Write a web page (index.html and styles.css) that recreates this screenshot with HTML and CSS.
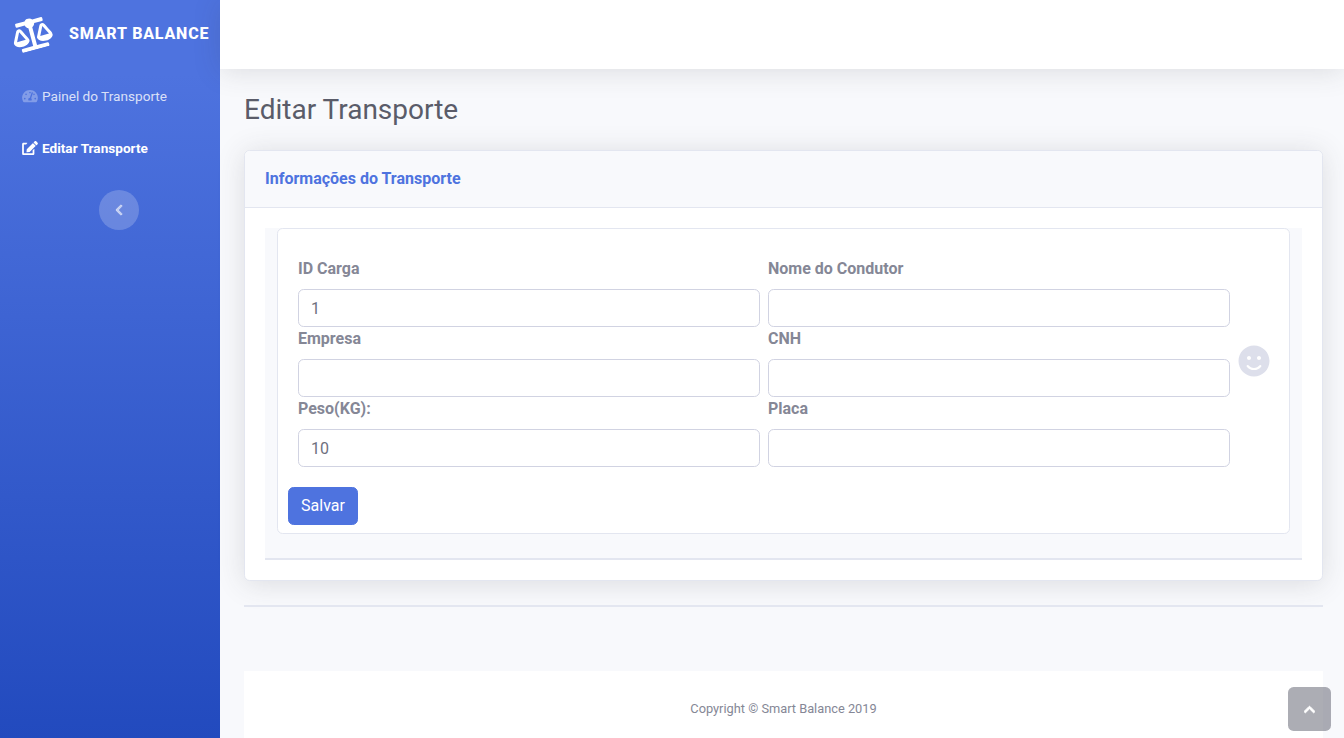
FILE: index.html
```html
<!DOCTYPE html>
<html lang="pt-BR">
<head>
    <meta charset="UTF-8">
    <meta name="viewport" content="width=device-width, initial-scale=1.0">
    <title>Editar Transporte</title>
    <link rel="stylesheet" href="styles.css">
</head>
<body>
    <div class="wrapper">
        <aside class="sidebar">
            <a class="brand" href="#">
                <svg class="brand-icon" viewBox="0 0 640 512"><path fill="currentColor" d="M256 336h-.02c0-16.18 1.34-8.73-85.05-181.51-17.65-35.29-68.19-35.36-85.87 0C-2.06 328.75.02 320.33.02 336H0c0 44.18 57.31 80 128 80s128-35.82 128-80zM128 176l72 144H56l72-144zm511.98 160c0-16.18 1.34-8.73-85.05-181.51-17.65-35.29-68.19-35.36-85.87 0-87.12 174.26-85.04 165.84-85.04 181.51H384c0 44.18 57.31 80 128 80s128-35.82 128-80h-.02zM440 320l72-144 72 144H440zm88 128H352V153.25c23.51-10.29 41.16-31.48 46.39-57.25H528c8.84 0 16-7.16 16-16V48c0-8.84-7.16-16-16-16H383.64C369.04 12.68 346.09 0 320 0s-49.04 12.68-63.64 32H112c-8.84 0-16 7.16-16 16v32c0 8.84 7.16 16 16 16h129.61c5.23 25.76 22.87 46.96 46.39 57.25V448H112c-8.84 0-16 7.16-16 16v32c0 8.84 7.16 16 16 16h416c8.84 0 16-7.16 16-16v-32c0-8.84-7.16-16-16-16z"/></svg>
                <span class="brand-text">SMART BALANCE</span>
            </a>
            <nav class="nav">
                <a class="nav-link" href="#">
                    <svg class="nav-icon" viewBox="0 0 576 512"><path fill="currentColor" d="M288 32C128.94 32 0 160.94 0 320c0 52.8 14.25 102.26 39.06 144.8 5.61 9.62 16.3 15.2 27.44 15.2h443c11.14 0 21.83-5.58 27.44-15.2C561.75 422.26 576 372.8 576 320c0-159.06-128.94-288-288-288zm0 64c14.71 0 26.58 10.13 30.32 23.65-1.11 2.26-2.64 4.23-3.45 6.67l-9.22 27.67c-5.13 3.49-10.97 6.01-17.64 6.01-17.67 0-32-14.33-32-32S270.33 96 288 96zM96 384c-17.67 0-32-14.33-32-32s14.33-32 32-32 32 14.33 32 32-14.33 32-32 32zm48-160c-17.67 0-32-14.33-32-32s14.33-32 32-32 32 14.33 32 32-14.33 32-32 32zm246.77-72.41l-61.33 184C343.13 347.33 352 364.54 352 384c0 11.72-3.38 22.55-8.88 32H232.88c-5.5-9.45-8.88-20.28-8.88-32 0-33.94 26.5-61.43 59.9-63.59l61.34-184.01c4.17-12.56 17.73-19.45 30.36-15.17 12.57 4.19 19.35 17.79 15.17 30.36zm14.66 57.2l15.52-46.55c3.47-1.29 7.13-2.23 11.05-2.23 17.67 0 32 14.33 32 32s-14.33 32-32 32c-11.38-.01-20.89-6.28-26.57-15.22zM480 384c-17.67 0-32-14.33-32-32s14.33-32 32-32 32 14.33 32 32-14.33 32-32 32z"/></svg>
                    <span>Painel do Transporte</span>
                </a>
                <a class="nav-link active" href="#">
                    <svg class="nav-icon" viewBox="0 0 576 512"><path fill="currentColor" d="M402.6 83.2l90.2 90.2c3.8 3.8 3.8 10 0 13.8L274.4 405.6l-92.8 10.3c-12.4 1.4-22.9-9.1-21.5-21.5l10.3-92.8L388.8 83.2c3.8-3.8 10-3.8 13.8 0zm162-22.9l-48.8-48.8c-15.2-15.2-39.9-15.2-55.2 0l-35.4 35.4c-3.8 3.8-3.8 10 0 13.8l90.2 90.2c3.8 3.8 10 3.8 13.8 0l35.4-35.4c15.2-15.3 15.2-40 0-55.2zM384 346.2V448H64V128h73.1c3.2 0 6.2-1.3 8.5-3.5l40-40c7.6-7.6 2.2-20.5-8.5-20.5H48C21.5 64 0 85.5 0 112v352c0 26.5 21.5 48 48 48h352c26.5 0 48-21.5 48-48V306.2c0-10.7-12.9-16-20.5-8.5l-40 40c-2.2 2.3-3.5 5.3-3.5 8.5z"/></svg>
                    <span>Editar Transporte</span>
                </a>
            </nav>
            <button class="sidebar-toggle" type="button" aria-label="Recolher menu">
                <svg viewBox="0 0 320 512"><path fill="currentColor" d="M34.52 239.03L228.87 44.69c9.37-9.37 24.57-9.37 33.94 0l22.67 22.67c9.36 9.36 9.37 24.52.04 33.9L131.49 256l154.02 154.75c9.34 9.38 9.32 24.54-.04 33.9l-22.67 22.67c-9.37 9.37-24.57 9.37-33.94 0L34.52 272.97c-9.37-9.37-9.37-24.57 0-33.94z"/></svg>
            </button>
        </aside>

        <div class="main">
            <header class="topbar"></header>

            <div class="content">
                <h1 class="page-title">Editar Transporte</h1>

                <section class="card">
                    <div class="card-header">
                        <h2>Informações do Transporte</h2>
                    </div>
                    <div class="card-body">
                        <div class="form-strip">
                            <form class="form-card">
                                <div class="form-row">
                                    <div class="fields">
                                        <div class="field">
                                            <label for="idCarga">ID Carga</label>
                                            <input type="text" id="idCarga" value="1">
                                        </div>
                                        <div class="field">
                                            <label for="condutor">Nome do Condutor</label>
                                            <input type="text" id="condutor">
                                        </div>
                                        <div class="field">
                                            <label for="empresa">Empresa</label>
                                            <input type="text" id="empresa">
                                        </div>
                                        <div class="field">
                                            <label for="cnh">CNH</label>
                                            <input type="text" id="cnh">
                                        </div>
                                        <div class="field">
                                            <label for="peso">Peso(KG):</label>
                                            <input type="text" id="peso" value="10">
                                        </div>
                                        <div class="field">
                                            <label for="placa">Placa</label>
                                            <input type="text" id="placa">
                                        </div>
                                    </div>
                                    <svg class="smile" viewBox="0 0 496 512"><path fill="currentColor" d="M248 8C111 8 0 119 0 256s111 248 248 248 248-111 248-248S385 8 248 8zm80 168c17.7 0 32 14.3 32 32s-14.3 32-32 32-32-14.3-32-32 14.3-32 32-32zm-160 0c17.7 0 32 14.3 32 32s-14.3 32-32 32-32-14.3-32-32 14.3-32 32-32zm194.8 170.2C334.3 380.4 292.5 400 248 400s-86.3-19.6-114.8-53.8c-13.6-16.3 11-36.7 24.6-20.5 22.4 26.9 55.2 42.2 90.2 42.2s67.8-15.4 90.2-42.2c13.4-16.2 38.1 4.2 24.6 20.5z"/></svg>
                                </div>
                                <button class="btn-save" type="button">Salvar</button>
                            </form>
                        </div>
                    </div>
                </section>

                <hr class="divider">
            </div>

            <footer class="footer">Copyright © Smart Balance 2019</footer>
        </div>
    </div>

    <a class="scroll-top" href="#" aria-label="Voltar ao topo">
        <svg viewBox="0 0 448 512"><path fill="currentColor" d="M240.971 130.524l194.343 194.343c9.373 9.373 9.373 24.569 0 33.941l-22.667 22.667c-9.357 9.357-24.522 9.375-33.901.04L224 227.495 69.255 381.516c-9.379 9.335-24.544 9.317-33.901-.04l-22.667-22.667c-9.373-9.373-9.373-24.569 0-33.941L207.03 130.525c9.372-9.373 24.568-9.373 33.941-.001z"/></svg>
    </a>
</body>
</html>
```

FILE: styles.css
```css
* {
    box-sizing: border-box;
}

html,
body {
    height: 100%;
    margin: 0;
    overflow: hidden;
}

body {
    font-family: Roboto, "Liberation Sans", sans-serif;
    font-size: 16px;
    line-height: 1.5;
    color: #858796;
    background-color: #f8f9fc;
}

a {
    text-decoration: none;
}

.wrapper {
    display: flex;
    height: 738px;
}

/* sidebar */
.sidebar {
    width: 220px;
    flex-shrink: 0;
    display: flex;
    flex-direction: column;
    background-color: #4e73df;
    background-image: linear-gradient(180deg, #4e73df 10%, #224abe 100%);
}

.brand {
    height: 70px;
    padding: 0 0 3px 12px;
    display: flex;
    align-items: center;
    color: #fff;
}

.brand-icon {
    width: 40px;
    height: 32px;
    transform: rotate(-15deg);
}

.brand-text {
    margin-left: 17px;
    font-size: 16px;
    font-weight: 800;
    letter-spacing: 0.8px;
    white-space: nowrap;
}

.nav-link {
    height: 52px;
    padding-left: 22px;
    display: flex;
    align-items: center;
    font-size: 13.6px;
    color: rgba(255, 255, 255, 0.8);
}

.nav-link.active {
    color: #fff;
    font-weight: 700;
}

.nav-icon {
    width: 16px;
    height: 14px;
    margin-right: 4px;
    color: rgba(255, 255, 255, 0.3);
}

.nav-link.active .nav-icon {
    color: #fff;
}

.sidebar-toggle {
    width: 40px;
    height: 40px;
    margin: 16px 0 0 99px;
    padding: 0;
    border: 0;
    border-radius: 50%;
    display: flex;
    align-items: center;
    justify-content: center;
    background-color: rgba(255, 255, 255, 0.2);
}

.sidebar-toggle svg {
    width: 8px;
    height: 12px;
    color: rgba(255, 255, 255, 0.6);
    stroke: currentColor;
    stroke-width: 30;
}

/* main column */
.main {
    flex: 1;
    min-width: 0;
    display: flex;
    flex-direction: column;
}

.topbar {
    height: 69px;
    flex-shrink: 0;
    background-color: #fff;
    box-shadow: 0 2.4px 28px 0 rgba(58, 59, 69, 0.15);
}

.content {
    flex: 1;
    padding: 0 21px 0 24px;
}

.page-title {
    margin: 24px 0 18px;
    font-size: 28px;
    font-weight: 400;
    line-height: 1.2;
    height: 39px;
    color: #5a5c69;
}

.card {
    height: 431px;
    background-color: #fff;
    border: 1px solid #e3e6f0;
    border-radius: 5.6px;
    box-shadow: 0 2.4px 28px 0 rgba(58, 59, 69, 0.15);
}

.card-header {
    height: 57px;
    padding: 0 20px;
    display: flex;
    align-items: center;
    background-color: #f8f9fc;
    border-bottom: 1px solid #e3e6f0;
    border-radius: 5px 5px 0 0;
}

.card-header h2 {
    margin: 0;
    font-size: 16px;
    font-weight: 700;
    color: #4e73df;
}

.card-body {
    padding: 20px;
}

.form-strip {
    padding: 0 12px 24px;
    background-color: #f8f9fc;
    border-bottom: 2px solid #e3e6f0;
}

.form-card {
    height: 306px;
    padding: 28px 10px 0;
    background-color: #fff;
    border: 1px solid #e3e6f0;
    border-radius: 5.6px;
}

.form-row {
    display: flex;
    align-items: center;
    padding-left: 10px;
}

.fields {
    display: grid;
    grid-template-columns: 462px 462px;
    column-gap: 8px;
}

.field label {
    display: block;
    margin-bottom: 8px;
    font-weight: 700;
    color: #858796;
}

.field input {
    display: block;
    width: 100%;
    height: 38px;
    padding: 6px 12px;
    font-family: inherit;
    font-size: 16px;
    color: #6e707e;
    background-color: #fff;
    border: 1px solid #d1d3e2;
    border-radius: 5.6px;
}

.smile {
    width: 32px;
    height: 32px;
    margin: 0 0 2px 8px;
    color: #dddfeb;
}

.btn-save {
    display: block;
    width: 70px;
    height: 38px;
    margin-top: 20px;
    padding: 0 0 2px;
    font-family: inherit;
    font-size: 16px;
    color: #fff;
    background-color: #4e73df;
    border: 1px solid #4e73df;
    border-radius: 5.6px;
}

.divider {
    margin: 24px 0 0;
    border: 0;
    border-top: 2px solid #e3e6f0;
}

.footer {
    height: 67px;
    flex-shrink: 0;
    margin: 0 21px 0 24px;
    padding-top: 28px;
    text-align: center;
    font-size: 12.8px;
    line-height: 20px;
    color: #858796;
    background-color: #fff;
}

/* floats over the footer */
.scroll-top {
    position: fixed;
    right: 13px;
    bottom: 7px;
    width: 43px;
    height: 44px;
    display: flex;
    align-items: center;
    justify-content: center;
    color: #fff;
    background-color: rgba(90, 92, 105, 0.5);
    border-radius: 5.6px;
}

.scroll-top svg {
    width: 11px;
    height: 13px;
    margin-top: 1px;
    stroke: currentColor;
    stroke-width: 40;
}
```
